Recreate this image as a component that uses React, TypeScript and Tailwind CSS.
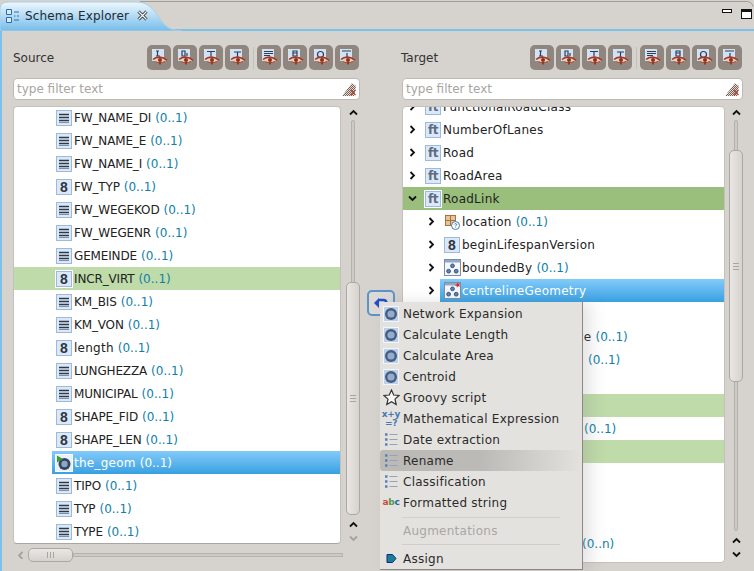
import type { ReactNode } from "react";

type IconKind = "list" | "eight" | "ft" | "geom" | "geomStar" | "bounds" | "loc" | "none";

interface RowData {
  name?: string;
  card?: string;
  icon?: IconKind;
  arrow?: "right" | "down";
  indent?: number;
  textPad?: number;
  tone?: "sel" | "green" | "dark";
}

const sourceRows: RowData[] = [
  { name: "FW_NAME_DI", card: "(0..1)", icon: "list" },
  { name: "FW_NAME_E", card: "(0..1)", icon: "list" },
  { name: "FW_NAME_I", card: "(0..1)", icon: "list" },
  { name: "FW_TYP", card: "(0..1)", icon: "eight" },
  { name: "FW_WEGEKOD", card: "(0..1)", icon: "list" },
  { name: "FW_WEGENR", card: "(0..1)", icon: "list" },
  { name: "GEMEINDE", card: "(0..1)", icon: "list" },
  { name: "INCR_VIRT", card: "(0..1)", icon: "eight", tone: "green" },
  { name: "KM_BIS", card: "(0..1)", icon: "list" },
  { name: "KM_VON", card: "(0..1)", icon: "list" },
  { name: "length", card: "(0..1)", icon: "eight" },
  { name: "LUNGHEZZA", card: "(0..1)", icon: "list" },
  { name: "MUNICIPAL", card: "(0..1)", icon: "list" },
  { name: "SHAPE_FID", card: "(0..1)", icon: "eight" },
  { name: "SHAPE_LEN", card: "(0..1)", icon: "eight" },
  { name: "the_geom", card: "(0..1)", icon: "geom", tone: "sel" },
  { name: "TIPO", card: "(0..1)", icon: "list" },
  { name: "TYP", card: "(0..1)", icon: "list" },
  { name: "TYPE", card: "(0..1)", icon: "list" },
];

const targetRows: RowData[] = [
  { name: "FunctionalRoadClass", icon: "ft", arrow: "right", indent: 0 },
  { name: "NumberOfLanes", icon: "ft", arrow: "right", indent: 0 },
  { name: "Road", icon: "ft", arrow: "right", indent: 0 },
  { name: "RoadArea", icon: "ft", arrow: "right", indent: 0 },
  { name: "RoadLink", icon: "ft", arrow: "down", indent: 0, tone: "dark" },
  { name: "location", card: "(0..1)", icon: "loc", arrow: "right", indent: 19 },
  { name: "beginLifespanVersion", icon: "eight", arrow: "right", indent: 19 },
  { name: "boundedBy", card: "(0..1)", icon: "bounds", arrow: "right", indent: 19 },
  { name: "centrelineGeometry", icon: "geomStar", arrow: "right", indent: 19, tone: "sel" },
  {},
  { name: "ce", card: "(0..1)", textPad: 174 },
  { card: "(0..1)", textPad: 181 },
  {},
  { tone: "green" },
  { card: "(0..1)", textPad: 177 },
  { tone: "green" },
  {},
  {},
  {},
  { card: "(0..n)", textPad: 175 },
];

const menuTop = [
  { label: "Network Expansion", icon: "ring" },
  { label: "Calculate Length", icon: "ring" },
  { label: "Calculate Area", icon: "ring" },
  { label: "Centroid", icon: "ring" },
  { label: "Groovy script", icon: "star" },
  { label: "Mathematical Expression", icon: "math" },
  { label: "Date extraction", icon: "lines" },
  { label: "Rename", icon: "lines", active: true },
  { label: "Classification", icon: "lines" },
  { label: "Formatted string", icon: "abc" },
];

function IconBox({ children, frame }: { children: ReactNode; frame?: boolean }) {
  return (
    <span
      className={`flex h-[16px] w-[16px] shrink-0 items-center justify-center overflow-hidden border border-[#9db9dd] bg-[#dbe8f8] ${
        frame ? "outline outline-1 outline-white" : ""
      }`}
    >
      {children}
    </span>
  );
}

function RowIcon({ kind, frame }: { kind: IconKind; frame?: boolean }) {
  if (kind === "list") {
    return (
      <svg width="16" height="16" viewBox="0 0 16 16" className="shrink-0">
        <rect x="0.5" y="0.5" width="15" height="15" fill="#dbe8f8" stroke="#9db9dd" />
        <path d="M3 4.5h10M3 7.5h10M3 10.5h10" stroke="#2f3a48" strokeWidth="1.4" />
        <path d="M3 12.5h10" stroke="#7f8fa3" />
      </svg>
    );
  }
  if (kind === "eight") {
    return (
      <IconBox frame={frame}>
        <span className="font-['Liberation_Sans'] text-[14px] font-bold leading-none text-[#2c3642]">8</span>
      </IconBox>
    );
  }
  if (kind === "ft") {
    return (
      <IconBox frame={frame}>
        <span className="font-['DejaVu_Sans'] text-[12px] font-bold leading-none tracking-[-0.5px] text-[#5b6d82]">
          ft
        </span>
      </IconBox>
    );
  }
  if (kind === "geom") {
    return (
      <svg width="18" height="18" viewBox="0 0 18 18" className="shrink-0">
        <rect x="0.5" y="0.5" width="17" height="17" fill="#e8f1fb" stroke="#ffffff" />
        <circle cx="9.5" cy="10" r="6" fill="#33475f" />
        <circle cx="9.5" cy="10" r="3.2" fill="#8ca6c4" />
        <path d="M2 1.5l6 3.5-6 3.5z" fill="#3f9d2f" />
      </svg>
    );
  }
  if (kind === "loc") {
    return (
      <svg width="16" height="16" viewBox="0 0 16 16" className="shrink-0">
        <rect x="1.5" y="1.5" width="10" height="10" fill="#e6c49a" stroke="#a8713d" />
        <path d="M6.5 1.5v10M1.5 6.5h10" stroke="#a8713d" />
        <circle cx="11.5" cy="11.5" r="4" fill="#ffffff" stroke="#3f7fb5" />
        <path d="M10.3 10.4c.4-1 2.4-1 2.4.2 0 .9-1.2.8-1.2 1.8M11.5 13.6v.4" stroke="#2f6fa5" fill="none" />
      </svg>
    );
  }
  return (
    <svg width="17" height="17" viewBox="0 0 17 17" className="shrink-0">
      <rect x="0.5" y="0.5" width="16" height="16" fill="#f4f7fb" stroke="#7c8ea5" />
      <rect x="1" y="1" width="15" height="2.5" fill="#8fa9c8" />
      <circle cx="8.5" cy="6.8" r="1.9" fill="#5e86b5" stroke="#27415f" strokeWidth="0.8" />
      <circle cx="4.6" cy="12.2" r="1.9" fill="#5e86b5" stroke="#27415f" strokeWidth="0.8" />
      <circle cx="12.2" cy="12.2" r="1.9" fill="#5e86b5" stroke="#27415f" strokeWidth="0.8" />
      {kind === "geomStar" && <path d="M10.5 3.5l2.5-1.2.2-2 1 1.7 1.8-.4-1.1 1.5 1 1.6-1.8-.5-1.3 1.4-.1-1.8z" fill="#e8202a" />}
    </svg>
  );
}

function Chevron({ dir }: { dir: "right" | "down" }) {
  return (
    <svg width="9" height="9" viewBox="0 0 9 9" className="shrink-0">
      <path
        d={dir === "right" ? "M2.5 1l3.5 3.5-3.5 3.5" : "M1 2.5l3.5 3.5 3.5-3.5"}
        fill="none"
        stroke="#111111"
        strokeWidth="1.8"
      />
    </svg>
  );
}

function Row({ row, source }: { row: RowData; source?: boolean }) {
  const tone =
    row.tone === "sel"
      ? "bg-gradient-to-b from-[#82cbf9] to-[#35a0e2] text-white"
      : row.tone === "green"
        ? "bg-[#bfdba9] text-[#222222]"
        : row.tone === "dark"
          ? "bg-[#9abe7b] text-[#222222]"
          : "text-[#222222]";
  const cardColor = row.tone === "sel" ? "text-white" : "text-[#0f80a8]";

  if (source) {
    // upper case names run a little narrower than the lower case ones
    const lower = row.name === row.name?.toLowerCase();
    return (
      <div className={`flex h-[23px] items-center ${row.tone === "sel" ? "ml-[38px] pl-[3px]" : "pl-[42px]"} ${tone}`}>
        <span className={`flex shrink-0 items-center ${row.tone === "sel" ? "w-[19px]" : "w-[18px]"}`}>
          {row.icon && <RowIcon kind={row.icon} frame={row.tone === "green"} />}
        </span>
        <span className={`whitespace-nowrap ${lower ? "tracking-[0.25px]" : "tracking-[-0.15px]"}`}>{row.name}</span>
        <span className={`ml-[4px] whitespace-nowrap ${cardColor}`}>{row.card}</span>
      </div>
    );
  }

  const selected = row.tone === "sel";
  return (
    <div className={`relative flex h-[23px] items-center tracking-[0.25px] ${selected ? "" : tone}`}>
      {row.icon && (
        <div className="flex items-center pl-[5px]" style={{ marginLeft: row.indent ?? 0 }}>
          <span className={`flex shrink-0 items-center ${selected ? "w-[13px]" : "w-[17px]"}`}>
            {row.arrow && <Chevron dir={row.arrow} />}
          </span>
        </div>
      )}
      <div className={`flex h-full min-w-0 flex-1 items-center ${selected ? tone : ""}`} style={{ paddingLeft: selected ? 4 : row.textPad }}>
        {row.icon && (
          <span className="flex w-[18px] shrink-0 items-center">
            <RowIcon kind={row.icon} frame={row.tone === "dark"} />
          </span>
        )}
        {row.name && <span className="whitespace-nowrap">{row.name}</span>}
        {row.card && <span className={`ml-[4px] whitespace-nowrap tracking-normal ${cardColor}`}>{row.card}</span>}
      </div>
    </div>
  );
}

const glyphs = [
  "M6 3h3M7.5 3v5M6 8h4",
  "M6 3h3v5H6zM11 5v3",
  "M5 3.5h8M9 3.5v5",
  "M6 4h7M9.5 4v5",
  "M4 3.5h9M4 5.5h9M4 7.5h6",
  "M7 3h4v2H7zM7 5h4v3H7z",
  "M5.5 6.5a3 3 0 1 1 6 0a3 3 0 1 1-6 0",
  "M4 3h9M9 5v4",
];

function ToolButton({ glyph }: { glyph: number }) {
  return (
    <button type="button" className="flex h-[25px] w-[24px] items-center justify-center rounded-[5px] bg-[#8e867f]">
      <svg width="19" height="19" viewBox="0 0 19 19">
        <rect x="2.5" y="1.5" width="11" height="11" fill="#cfe2f8" stroke="#eaf2fb" strokeWidth="0.7" />
        <path d={glyphs[glyph]} fill="none" stroke="#2e3f57" strokeWidth="1.2" />
        <path d="M3 11.5c3.5-3.4 9.5-3.4 14 .8c-4 3-10 3-14-.8z" fill="#e6cfc4" />
        <path d="M3 11.5c3.5-3.4 9.5-3.4 14 .8" fill="none" stroke="#a5381f" strokeWidth="1.7" />
        <path d="M5.5 13.8c3 1.3 6.5 1.2 9.5-.4" fill="none" stroke="#b14a30" strokeWidth="1" />
        <circle cx="10" cy="12" r="2" fill="#8e2f1b" />
        <rect x="9" y="14" width="2" height="2.5" fill="#9a3a22" />
      </svg>
    </button>
  );
}

function Toolbar() {
  return (
    <div className="flex items-center gap-[2px]">
      {[0, 1, 2, 3].map((g) => (
        <ToolButton key={g} glyph={g} />
      ))}
      <span className="mx-[1.5px] h-[22px] w-px bg-[#c4c0bb]" />
      {[4, 5, 6, 7].map((g) => (
        <ToolButton key={g} glyph={g} />
      ))}
    </div>
  );
}

function FilterBox({ className, id }: { className: string; id: string }) {
  return (
    <div className={`flex h-[22px] items-center justify-between rounded-[4px] border border-[#bdb9b4] bg-white pl-[3px] pr-[2px] ${className}`}>
      <span className="text-[#a9a5a1]">type filter text</span>
      <svg width="16" height="16" viewBox="0 0 16 16">
        <defs>
          <pattern id={id} width="2" height="2" patternUnits="userSpaceOnUse">
            <rect width="2" height="2" fill="#e6dfd8" />
            <rect width="1" height="1" fill="#6f6058" />
            <rect x="1" y="1" width="1" height="1" fill="#6f6058" />
          </pattern>
        </defs>
        <path d="M1 15L11 2l4 3-2 10z" fill={`url(#${id})`} />
        <path d="M9.5 9l5 5M14.5 9l-5 5" stroke="#b04434" strokeWidth="1.3" />
      </svg>
    </div>
  );
}

function Caret({ dir, muted }: { dir: "up" | "down" | "left"; muted?: boolean }) {
  const d = dir === "up" ? "M1 5.5L4.5 2 8 5.5" : dir === "down" ? "M1 2.5L4.5 6 8 2.5" : "M5.5 1L2 4.5 5.5 8";
  return (
    <svg width="9" height="8" viewBox="0 0 9 8" className="shrink-0">
      <path d={d} fill="none" stroke={muted ? "#a5a19d" : "#111111"} strokeWidth="1.8" />
    </svg>
  );
}

function Grip({ vertical }: { vertical?: boolean }) {
  return (
    <span className={`flex ${vertical ? "flex-col gap-[2px]" : "gap-[2px]"}`}>
      {[0, 1, 2].map((i) => (
        <span key={i} className={vertical ? "h-px w-[6px] bg-[#a8a4a0]" : "h-[6px] w-px bg-[#a8a4a0]"} />
      ))}
    </span>
  );
}

function VScroll({ thumbTop, thumbHeight, trackHeight, muteDown, x }: {
  thumbTop: number;
  thumbHeight: number;
  trackHeight: number;
  muteDown?: boolean;
  x: string;
}) {
  return (
    <div className={`flex w-[14px] flex-col items-center ${x}`}>
      <div className="flex h-[14px] items-center">
        <Caret dir="up" />
      </div>
      <div className="relative w-full" style={{ height: trackHeight }}>
        <div className="mx-auto h-full w-[4px] rounded-full border border-[#b5b1ac] bg-[#cdc9c5]" />
        <div
          className="absolute left-0 flex w-[14px] items-center justify-center rounded-[5px] border border-[#aba7a2] bg-gradient-to-r from-[#e9e6e3] to-[#d6d2ce]"
          style={{ top: thumbTop, height: thumbHeight }}
        >
          <Grip vertical />
        </div>
      </div>
      <div className="flex h-[14px] items-end">
        <Caret dir="up" />
      </div>
      <div className="flex h-[13px] items-end">
        <Caret dir="down" muted={muteDown} />
      </div>
    </div>
  );
}

function MenuIcon({ kind }: { kind: string }) {
  if (kind === "ring") {
    return (
      <svg width="16" height="16" viewBox="0 0 16 16">
        <rect width="16" height="16" fill="#f2f6fb" />
        <rect x="1" y="1" width="14" height="14" fill="#bcd0ea" />
        <circle cx="8" cy="8" r="6" fill="#465d80" />
        <circle cx="8" cy="8" r="3.6" fill="#93aecd" />
      </svg>
    );
  }
  if (kind === "star") {
    return (
      <svg width="17" height="17" viewBox="0 0 17 17">
        <path d="M8.5 1l2.2 5 5.3.5-4 3.6 1.2 5.4-4.7-2.8-4.7 2.8 1.2-5.4-4-3.6 5.3-.5z" fill="#f7f7f5" stroke="#333333" strokeWidth="1.2" />
      </svg>
    );
  }
  if (kind === "math") {
    return (
      <span className="flex w-[16px] flex-col items-center font-['DejaVu_Sans'] text-[9px] font-bold leading-[9px] tracking-[-0.3px] text-[#4a78b5]">
        <span>x+y</span>
        <span>=?</span>
      </span>
    );
  }
  if (kind === "lines") {
    return (
      <svg width="14" height="14" viewBox="0 0 14 14">
        <path d="M1 1.5h2.5M1 6.5h2.5M1 11.5h2.5" stroke="#5f80b5" strokeWidth="2.6" />
        <path d="M5.5 1.5h8M5.5 6.5h8M5.5 11.5h8" stroke="#97a3b5" strokeWidth="1.2" />
      </svg>
    );
  }
  return (
    <span className="-ml-px flex w-[16px] font-['DejaVu_Sans'] text-[9px] font-bold leading-none tracking-[-0.3px]">
      <span className="text-[#cf4a3c]">a</span>
      <span className="text-[#4d9a45]">b</span>
      <span className="text-[#2d5fa5]">c</span>
    </span>
  );
}

function PopupMenu() {
  return (
    <div className="absolute left-[380px] top-[302px] z-10 h-[268px] w-[203px] border-b border-r border-[#8c8985] bg-[#e4e2df] pt-px tracking-[0.25px] shadow-[8px_0_14px_rgba(130,130,130,0.22)]">
      {menuTop.map((item) => (
        <div
          key={item.label}
          className={`flex h-[21px] items-center pl-[2px] ${
            item.active ? "rounded-l-[3px] bg-gradient-to-r from-[#bcbab6] via-[#bcbab6] to-[#e4e2df]" : ""
          }`}
        >
          <span className="flex w-[21px] shrink-0 items-center justify-center pr-[3px]">
            <MenuIcon kind={item.icon} />
          </span>
          <span className="whitespace-nowrap text-[#2a2a2a]">{item.label}</span>
        </div>
      ))}
      <div className="mx-[22px] mb-[2px] mt-[4px] h-px bg-[#d2d0cd]" />
      <div className="flex h-[21px] items-center pl-[23px] text-[#a9a7a4]">Augmentations</div>
      <div className="mx-[22px] my-[3px] h-px bg-[#cfcdca]" />
      <div className="flex h-[21px] items-center pl-[2px]">
        <span className="flex w-[21px] items-center justify-center pr-[3px]">
          <svg width="11" height="11" viewBox="0 0 11 11">
            <path d="M1 1.5h5.5l3.5 4-3.5 4H1z" fill="#17838f" stroke="#16238f" />
          </svg>
        </span>
        <span className="text-[#2a2a2a]">Assign</span>
      </div>
    </div>
  );
}

export default function App() {
  return (
    <div className="relative flex h-[571px] w-[754px] flex-col overflow-hidden bg-[#d6d2ce] font-['DejaVu_Sans',sans-serif] text-[12px] text-[#222222]">
      {/* title strip */}
      <div className="relative flex h-[31px] shrink-0 items-center border-b-2 border-[#7cc1ec]">
        <svg width="754" height="31" viewBox="0 0 754 31" className="absolute left-0 top-0">
          <defs>
            <linearGradient id="tabFill" x1="0" y1="0" x2="0" y2="1">
              <stop offset="0" stopColor="#eef7fd" />
              <stop offset="1" stopColor="#75bdeb" />
            </linearGradient>
          </defs>
          <path d="M140 1.5H746q6 0 7 5" fill="none" stroke="#a19d98" />
          <path d="M0 31V9q0-7 8-7h128c12 0 17 7 22 14s9 15 24 15z" fill="url(#tabFill)" stroke="#a9cfe9" />
        </svg>
        <div className="relative mt-[2px] flex items-center pl-[6px]">
          <svg width="14" height="16" viewBox="0 0 14 16">
            <path d="M.5 1.5h5v5h-5zM.5 9.5h5v5h-5z" fill="#dcebf8" stroke="#2b6cb0" />
            <path d="M8 4h5M8 8h1.5M11 8h2M8 12h5" stroke="#2b6cb0" />
          </svg>
          <span className="ml-[5px] whitespace-nowrap tracking-[0.13px] text-[#1f2a33]">Schema Explorer</span>
          <svg width="11" height="11" viewBox="0 0 11 11" className="ml-[8px]">
            <path d="M1.5 1.5l8 8M9.5 1.5l-8 8" stroke="#2a2a2a" strokeWidth="3" />
            <path d="M1.5 1.5l8 8M9.5 1.5l-8 8" stroke="#ffffff" strokeWidth="1.2" />
          </svg>
        </div>
        <div className="absolute right-[2px] top-[9px] flex items-start gap-[9px]">
          <span className="h-[4px] w-[10px] border border-[#111111] bg-white" />
          <span className="h-[10px] w-[11px] border border-[#111111] border-t-[3px] bg-white" />
        </div>
      </div>

      <div className="flex min-h-0 flex-1 border-l-2 border-[#7cc1ec]">
        {/* source */}
        <div className="flex w-[358px] shrink-0 flex-col pl-[11px] pt-[14px]">
          <div className="flex h-[25px] items-center justify-between pr-[1px]">
            <span className="text-[#333333]">Source</span>
            <Toolbar />
          </div>
          <FilterBox id="eraserSource" className="mt-[8px] w-[347px]" />
          <div className="mt-[6px] flex">
            <div className="h-[438px] w-[328px] overflow-hidden rounded-[4px] border border-[#c4c0bb] border-b-[#aaa6a1] bg-white">
              <div className="-mt-px">
                {sourceRows.map((row) => (
                  <Row key={row.name} row={row} source />
                ))}
              </div>
            </div>
            <VScroll x="ml-[5px]" thumbTop={162} thumbHeight={233} trackHeight={395} muteDown />
          </div>
          <div className="mt-[4px] flex h-[14px] w-[330px] items-center pl-[4px]">
            <Caret dir="left" muted />
            <span className="ml-[2px] flex h-[14px] w-[45px] items-center justify-center rounded-[5px] border border-[#aba7a2] bg-gradient-to-b from-[#e9e6e3] to-[#d6d2ce]">
              <Grip />
            </span>
            <span className="h-[4px] flex-1 border border-[#b5b1ac] bg-[#cdc9c5]" />
          </div>
        </div>

        {/* transfer button */}
        <div className="flex w-[42px] shrink-0 flex-col items-center pr-[1px] pt-[259px]">
          <button type="button" className="flex h-[26px] w-[28px] items-start justify-center rounded-[5px] border-2 border-[#5d93cb] bg-[#dcd9d6] pt-[4px]">
            <svg width="15" height="13" viewBox="0 0 15 13">
              <path d="M1 7L6 2v10z" fill="#1f4fd0" />
              <path d="M5 4h5.5q3 0 3 3.5V10" fill="none" stroke="#1f4fd0" strokeWidth="2.6" />
            </svg>
          </button>
        </div>

        {/* target */}
        <div className="flex w-[344px] shrink-0 flex-col pt-[14px]">
          <div className="flex h-[25px] items-center justify-between pr-[4px]">
            <span className="-ml-px text-[#333333]">Target</span>
            <Toolbar />
          </div>
          <FilterBox id="eraserTarget" className="mt-[8px] w-[341px]" />
          <div className="mt-[6px] flex">
            <div className="h-[457px] w-[323px] overflow-hidden rounded-[4px] border border-[#c4c0bb] bg-white">
              <div className="-mt-[12px]">
                {targetRows.map((row, i) => (
                  <Row key={i} row={row} />
                ))}
              </div>
            </div>
            <VScroll x="ml-[4px]" thumbTop={30} thumbHeight={232} trackHeight={411} />
          </div>
        </div>
      </div>

      <PopupMenu />
    </div>
  );
}
